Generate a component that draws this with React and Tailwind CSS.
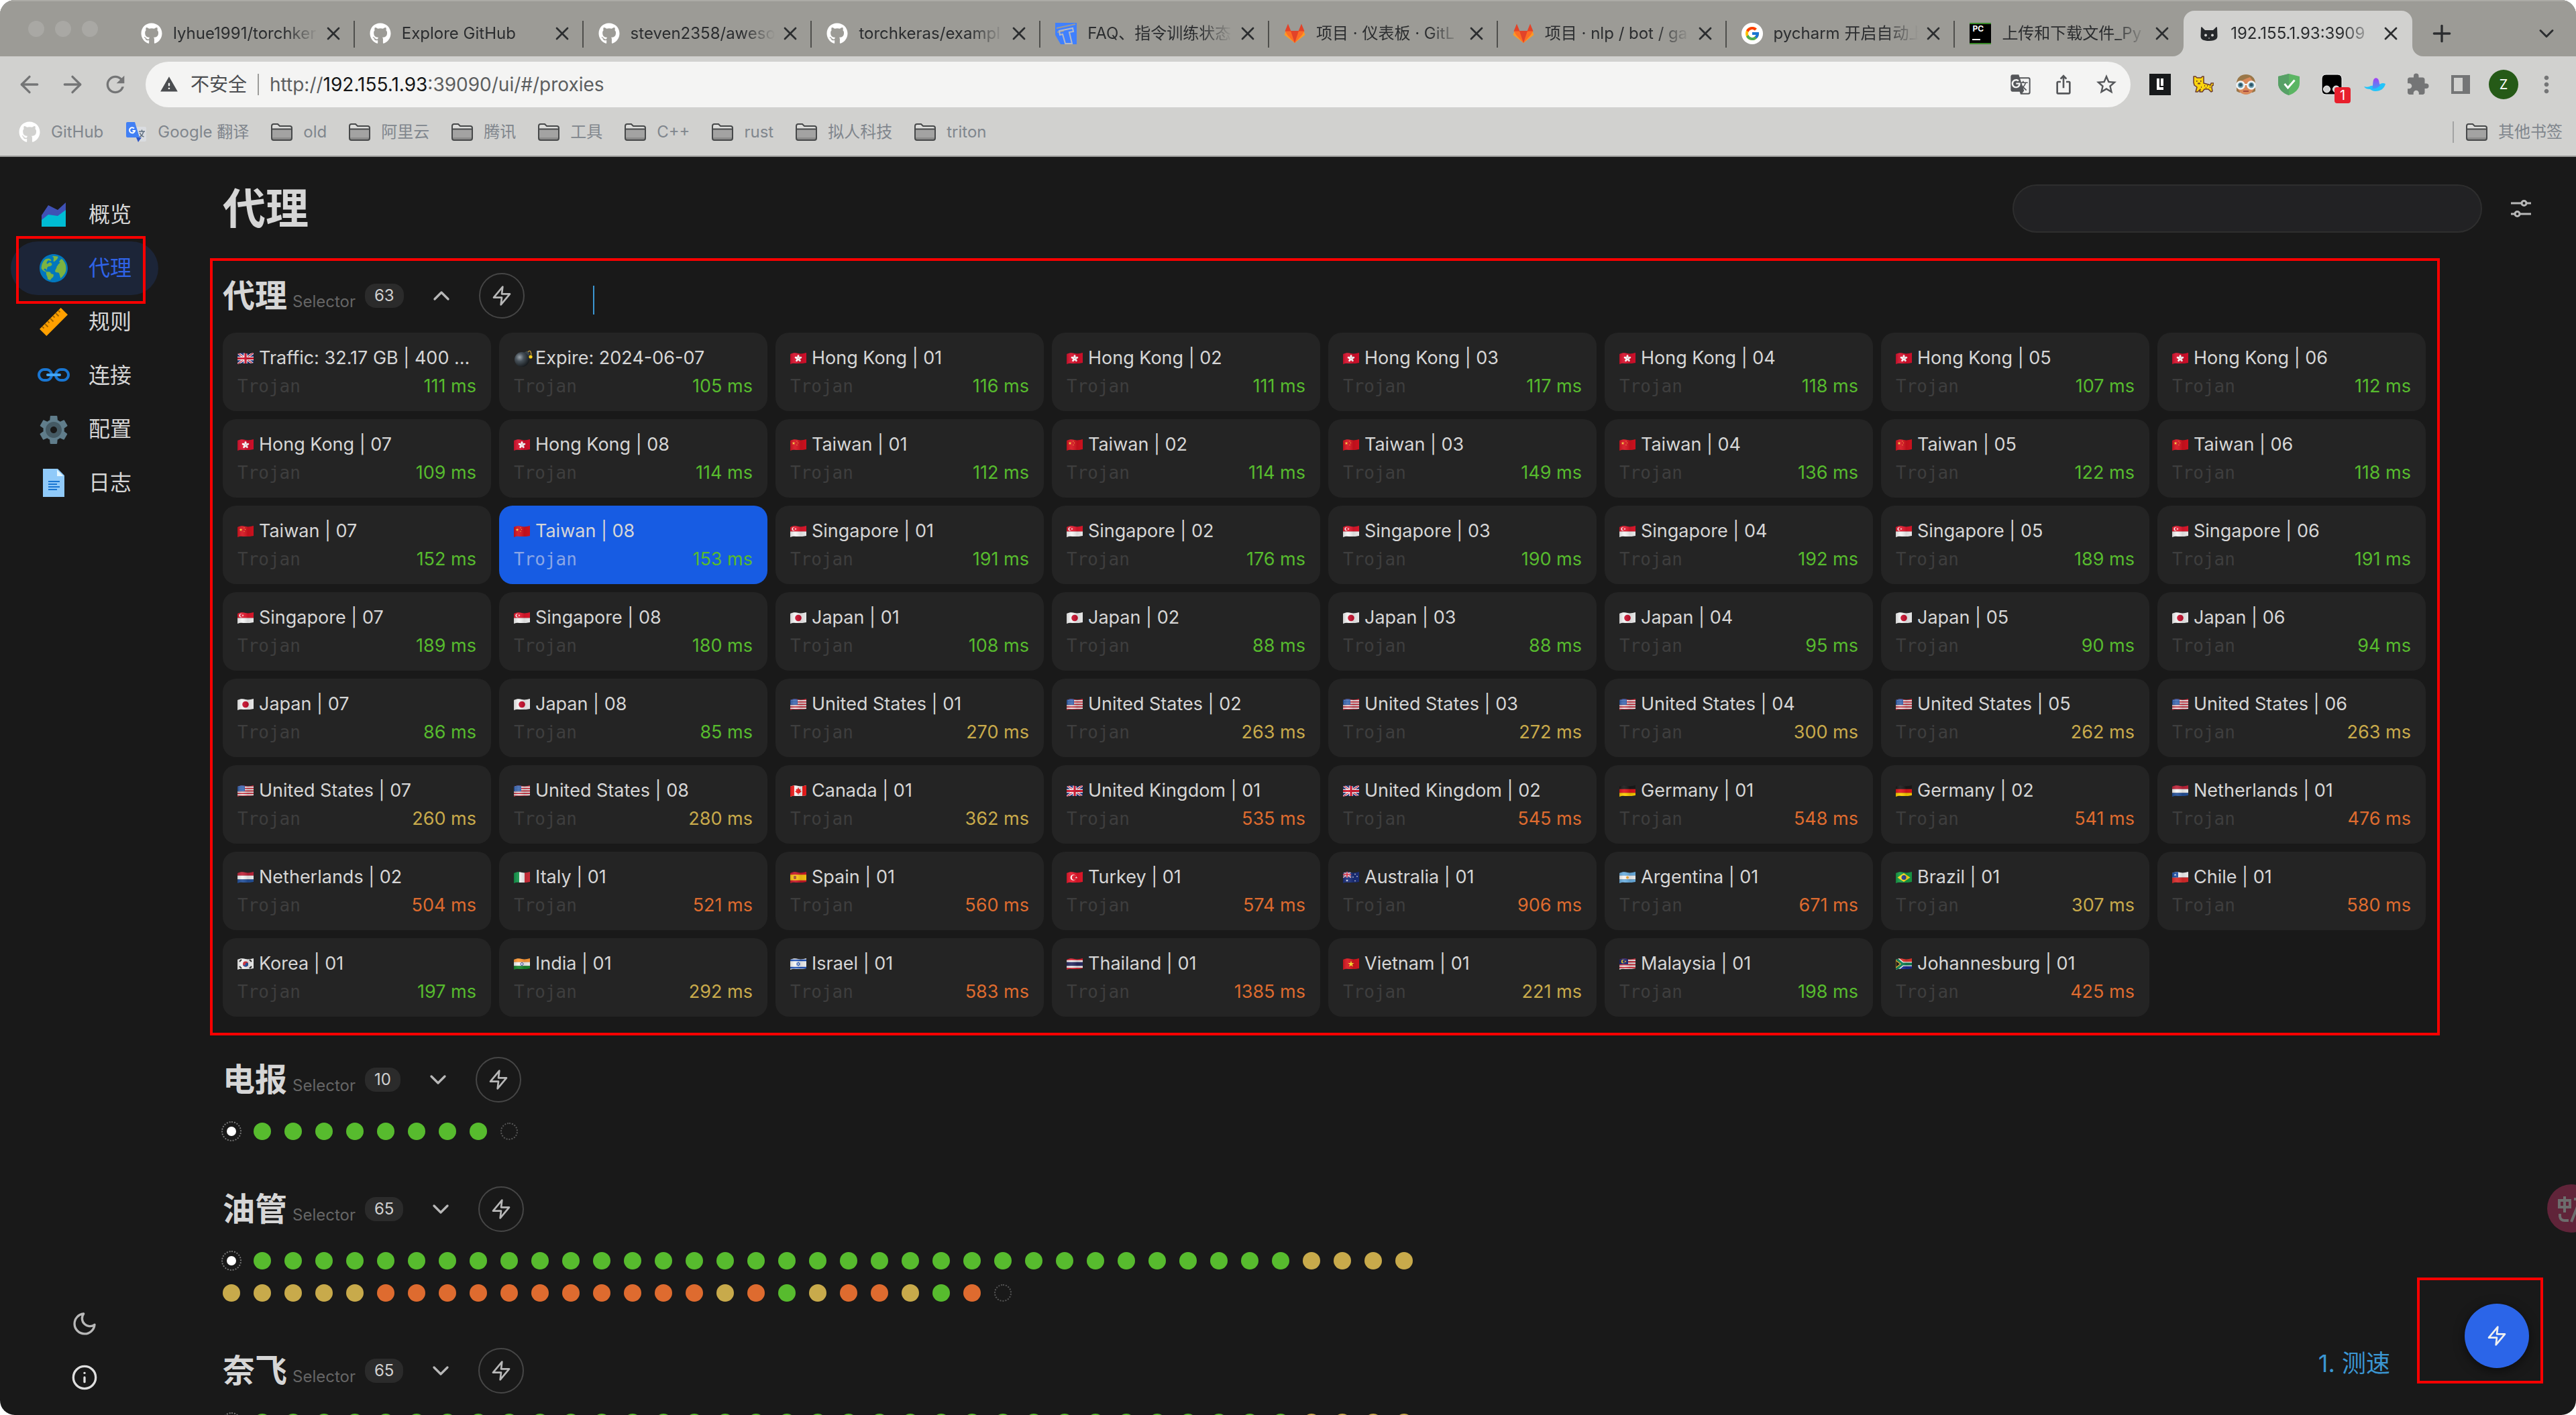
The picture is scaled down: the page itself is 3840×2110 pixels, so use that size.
import React from "react";
import { FaGithub } from "react-icons/fa";
import {
  FcAreaChart,
  FcDocument,
  FcGlobe,
  FcGoogle,
  FcLink,
  FcRuler,
  FcSettings,
} from "react-icons/fc";
import { FiChevronDown, FiChevronUp, FiInfo, FiMoon, FiZap } from "react-icons/fi";
import { MdExtension, MdGTranslate, MdIosShare, MdMoreVert, MdRefresh, MdStarBorder, MdWarning } from "react-icons/md";
import { ArrowLeft, ArrowRight, ChevronDown, Plus, X } from "lucide-react";

/* ---------- small drawings ---------- */

const GitLabIcon = () => (
  <svg viewBox="0 0 32 32" className="size-8">
    <path d="M16 30 0.5 18 3 11.5 16 13 29 11.5 31.5 18Z" fill="#fc9a26" />
    <path d="M16 30 5 18 1.5 12H30.5L27 18Z" fill="#fc6d26" />
    <path d="M16 30 10 12H22Z" fill="#e24329" />
    <path d="M1.5 12.5 6 1.500 10.500 12.500ZM30.5 12.500 26 1.500 21.500 12.500Z" fill="#e24329" />
  </svg>
);

const DocsIcon = () => (
  <svg viewBox="0 0 32 32" className="size-8">
    <rect width="32" height="32" fill="#4080ff" />
    <path d="M2 8 30 2 M3 14 13 12" stroke="#9c9b96" strokeWidth="2" />
    <path d="M6 12 26 8 27 13 21 14 25 31H15L11 17 7 18Z" fill="none" stroke="#b5b9c4" strokeWidth="2" />
    <path d="M0 18 8 32H0Z" fill="#9c9b96" />
  </svg>
);

const GoogleIcon = () => (
  <span className="flex size-8 items-center justify-center rounded-full bg-white">
    <FcGoogle className="size-6" />
  </span>
);

const PyCharmIcon = () => (
  <span className="flex size-8 flex-col justify-between border-y-2 border-y-[#3a8a2a] bg-black px-1 pb-1 text-[12px] leading-[14px] font-bold text-white">
    PC
    <span className="h-[2px] w-3 bg-white" />
  </span>
);

const CatIcon = () => (
  <svg viewBox="0 0 32 32" className="size-8">
    <path
      d="M4 7 5 6 10 11H22L27 6 28 7 28.500 20C28.500 25 24 27 16 27S3.500 25 3.500 20Z"
      fill="#26282b"
    />
    <circle cx="11" cy="18.500" r="2" fill="#d1d1cf" />
    <circle cx="21" cy="18.500" r="2" fill="#d1d1cf" />
    <path d="M14.500 22.500h3L16 24Z" fill="#d1d1cf" />
  </svg>
);

const GitHubIcon = () => <FaGithub className="size-8 text-white" />;

const TranslateIcon = () => (
  <svg viewBox="0 0 32 32" className="size-8">
    <path d="M13 8H29a2 2 0 0 1 2 2V28a2 2 0 0 1-2 2H19Z" fill="#dadce0" />
    <path d="M16 24 19 31 24 24Z" fill="#2f56c4" />
    <path d="M3 1H14L21 24H3a2 2 0 0 1-2-2V3a2 2 0 0 1 2-2Z" fill="#4280f4" />
    <path d="M13 10.500A4 4 0 1 0 14 14H10.500" fill="none" stroke="#fff" strokeWidth="2" />
    <path d="M20 15h9M24.500 12.500V15M27 15c-1 4-3 7-6 8M21.500 17c1 3 3 5 6 6" fill="none" stroke="#5f6f80" strokeWidth="1.500" />
  </svg>
);

const FolderIcon = () => (
  <svg viewBox="0 0 32 26" className="h-[26px] w-8 shrink-0">
    <path d="M1 4a3 3 0 0 1 3-3h6l3 3h15a3 3 0 0 1 3 3v15a3 3 0 0 1-3 3H4a3 3 0 0 1-3-3Z" fill="#dcdcda" />
    <path d="M2 9H30V24H2Z" fill="#a3a3a2" />
    <path d="M2 21H30V24H2Z" fill="#8b8b8a" />
    <path
      d="M1 4a3 3 0 0 1 3-3h6l3 3h15a3 3 0 0 1 3 3v15a3 3 0 0 1-3 3H4a3 3 0 0 1-3-3ZM1 8.500H31"
      fill="none"
      stroke="#47494a"
      strokeWidth="2"
    />
  </svg>
);

const SlidersIcon = () => (
  <svg viewBox="0 0 32 28" className="h-7 w-8" fill="none" stroke="#b8b8b8" strokeWidth="3">
    <path d="M1 6H16M25 6H31M1 22H6M15 22H31" />
    <circle cx="20.500" cy="6" r="3.500" />
    <circle cx="10.500" cy="22" r="3.500" />
  </svg>
);

/* ---------- browser frame ---------- */

const TABS = [
  { icon: GitHubIcon, title: "lyhue1991/torchker" },
  { icon: GitHubIcon, title: "Explore GitHub" },
  { icon: GitHubIcon, title: "steven2358/aweso" },
  { icon: GitHubIcon, title: "torchkeras/exampl" },
  { icon: DocsIcon, title: "FAQ、指令训练状态" },
  { icon: GitLabIcon, title: "项目 · 仪表板 · GitL" },
  { icon: GitLabIcon, title: "项目 · nlp / bot / ga" },
  { icon: GoogleIcon, title: "pycharm 开启自动上" },
  { icon: PyCharmIcon, title: "上传和下载文件_Py" },
  { icon: CatIcon, title: "192.155.1.93:3909", active: true },
];

function Tab({ icon: Icon, title, active, divider }) {
  return (
    <div
      className={
        "relative flex h-[68px] min-w-0 flex-1 items-center pr-4 pl-[22px] " +
        (active ? "rounded-t-[16px] bg-[#d1d1cf]" : "")
      }
    >
      {active && (
        <>
          <svg viewBox="0 0 16 16" className="absolute bottom-0 -left-4 size-4">
            <path d="M16 0V16H0A16 16 0 0 0 16 0Z" fill="#d1d1cf" />
          </svg>
          <svg viewBox="0 0 16 16" className="absolute -right-4 bottom-0 size-4">
            <path d="M0 0V16H16A16 16 0 0 1 0 0Z" fill="#d1d1cf" />
          </svg>
        </>
      )}
      <button className="flex min-w-0 flex-1 items-center gap-4 text-left">
        <span className="shrink-0">
          <Icon />
        </span>
        <span className="min-w-0 flex-1 text-[24px] leading-8 whitespace-nowrap text-[#2b2d2f] [mask-image:linear-gradient(to_right,black_76%,transparent_99%)]">
          {title}
        </span>
      </button>
      <button aria-label={"关闭 " + title} className="ml-1 shrink-0">
        <X className="size-8 text-[#2b2d2f]" strokeWidth={2} />
      </button>
      {divider && <span className="absolute top-[15px] right-0 h-10 w-[2px] bg-[#4f4f4c]" />}
    </div>
  );
}

const BOOKMARKS = [
  { icon: GitHubIcon, label: "GitHub" },
  { icon: TranslateIcon, label: "Google 翻译" },
  { label: "old" },
  { label: "阿里云" },
  { label: "腾讯" },
  { label: "工具" },
  { label: "C++" },
  { label: "rust" },
  { label: "拟人科技" },
  { label: "triton" },
];

function Bookmark({ icon: Icon = FolderIcon, label }) {
  return (
    <a href="#bookmark" className="flex items-center gap-4">
      <Icon />
      {label}
    </a>
  );
}

function Slot({ label, children }) {
  return (
    <button aria-label={label} className="relative flex w-16 shrink-0 items-center justify-center">
      {children}
    </button>
  );
}

function Extensions() {
  return (
    <>
      <Slot label="L">
        <svg viewBox="0 0 32 32" className="size-8">
          <rect width="32" height="32" fill="#17191b" />
          <path d="M11 7H15V20H21V24H11Z" fill="#fff" />
          <path d="M17 7H21V18H17Z" fill="#fff" />
        </svg>
      </Slot>
      <Slot label="Cat">
        <svg viewBox="0 0 32 32" className="size-8">
          <path
            d="M2 4 5 4 7 6H13L15 4 17 4 17 14 24 16 27 17 28 14H32V17H30L29 20 30 26 28 27 24 23 18 23 15 27H11L12 23 8 27H5L7 20 3 17 2 13Z"
            fill="#fbd50e"
            stroke="#6b3a2c"
            strokeWidth="1.500"
            strokeLinejoin="round"
          />
          <path d="M6 11h1.500M12 11h1.500M8 14.500h4M18 18h1M22 18h1M13 20h1M20 21h1M26 20h1" stroke="#6b3a2c" strokeWidth="2" />
        </svg>
      </Slot>
      <Slot label="Persona">
        <svg viewBox="0 0 32 32" className="size-8">
          <path d="M2 15C2 6 8 1 16 1S30 6 30 15L30 26 26 28H6L2 26Z" fill="#9a7748" />
          <path d="M4 15Q10 9 22 5 28 12 28 18C28 26 23 31 16 31S4 26 4 18Z" fill="#d98a5b" />
          <circle cx="8" cy="17" r="5.500" fill="#6fa3b5" stroke="#f2f4f5" strokeWidth="2.500" />
          <circle cx="24" cy="17" r="5.500" fill="#6fa3b5" stroke="#f2f4f5" strokeWidth="2.500" />
          <circle cx="8" cy="16.500" r="2.500" fill="#2f5566" />
          <circle cx="24" cy="16.500" r="2.500" fill="#2f5566" />
          <path d="M13.500 16H18.500" stroke="#f2f4f5" strokeWidth="2" />
          <path d="M12 26H20" stroke="#a5483c" strokeWidth="2" />
        </svg>
      </Slot>
      <Slot label="Shield">
        <svg viewBox="0 0 32 32" className="size-8">
          <path d="M16 0 32 4V14C32 23 25 29 16 32 7 29 0 23 0 14V4Z" fill="#5bb563" />
          <path d="M16 0V32C7 29 0 23 0 14V4Z" fill="#57a066" />
          <path d="M9.500 15 14.500 21 24.500 9.500" fill="none" stroke="#fff" strokeWidth="3" />
        </svg>
      </Slot>
      <Slot label="Tampermonkey">
        <svg viewBox="0 0 32 32" className="size-8">
          <rect x="1" y="1" width="30" height="30" rx="6" fill="#000" stroke="#fff" strokeWidth="1" />
          <circle cx="8.500" cy="23" r="5" fill="#cfcfcf" stroke="#fff" />
          <circle cx="22.500" cy="23" r="5" fill="#cfcfcf" stroke="#fff" />
        </svg>
        <span className="absolute top-5 right-1 flex h-6 w-6 items-center justify-center rounded-[4px] bg-[#e81f2c] text-[20px] leading-6 text-white">
          1
        </span>
      </Slot>
      <Slot label="Bird">
        <svg viewBox="0 0 32 32" className="size-8">
          <defs>
            <linearGradient id="bird-wing" x1="0" y1="0" x2="0" y2="1">
              <stop offset="0" stopColor="#a63df5" />
              <stop offset="1" stopColor="#3f9df5" />
            </linearGradient>
          </defs>
          <path d="M0 19C4 20 7 20 10 18L22 17C25 14 28 13 32 15 30 22 25 26 17 26 13 26 11 24 9 23 5 23 2 22 0 19Z" fill="#22c4fa" />
          <path d="M12 22C13 21 13 17 13.500 12 14 7 17 5 20 7 23 9 22 14 24 17 21 21 17 23 12 22Z" fill="url(#bird-wing)" />
        </svg>
      </Slot>
      <Slot label="扩展程序">
        <MdExtension className="size-9 text-[#747576]" />
      </Slot>
      <Slot label="侧边栏">
        <svg viewBox="0 0 28 28" className="size-7">
          <path d="M0 0H28V28H0ZM4 4V24H17V4Z" fillRule="evenodd" fill="#747576" />
        </svg>
      </Slot>
      <Slot label="账号">
        <span className="flex size-11 items-center justify-center rounded-full bg-[#255a17] text-[20px] leading-none text-white">Z</span>
      </Slot>
      <Slot label="菜单">
        <MdMoreVert className="size-10 text-[#747576]" />
      </Slot>
    </>
  );
}

function BrowserFrame() {
  return (
    <header className="border-b-2 border-b-[#9a9a98] bg-[#d1d1cf]">
      <div className="flex h-[84px] items-end border-t-2 border-t-[#acaba6] bg-[#9c9b96]">
        <div className="flex w-[188px] shrink-0 gap-4 self-start pt-[29px] pl-[42px]">
          <span className="size-6 rounded-full bg-[#a9a8a4]" />
          <span className="size-6 rounded-full bg-[#a9a8a4]" />
          <span className="size-6 rounded-full bg-[#a9a8a4]" />
        </div>
        <div className="flex min-w-0 flex-1">
          {TABS.map((t, i) => (
            <Tab key={i} {...t} divider={i < TABS.length - 2} />
          ))}
        </div>
        <div className="flex h-[68px] w-[244px] shrink-0 items-center justify-between pr-[26px] pl-6 text-[#2b2d2f]">
          <button aria-label="新标签页">
            <Plus className="size-10" strokeWidth={2} />
          </button>
          <button aria-label="搜索标签页">
            <ChevronDown className="size-9" strokeWidth={2} />
          </button>
        </div>
      </div>

      <div className="flex h-[84px] items-center pr-3 text-[#747576]">
        <div className="flex w-[217px] shrink-0 items-center pl-3">
          <Slot label="返回">
            <ArrowLeft className="size-10" strokeWidth={2} />
          </Slot>
          <Slot label="前进">
            <ArrowRight className="size-10" strokeWidth={2} />
          </Slot>
          <Slot label="重新加载">
            <MdRefresh className="size-10" />
          </Slot>
        </div>
        <div className="mr-3 flex h-[68px] min-w-0 flex-1 items-center rounded-full bg-[#f4f4f3] pr-1 pl-[21px]">
          <MdWarning className="size-7 text-[#4b4d50]" />
          <span className="ml-[18px] text-[28px] leading-8 text-[#4b4d50]">不安全</span>
          <span className="mx-4 h-8 w-[2px] bg-[#9c9c9a]" />
          <span role="textbox" aria-label="地址" tabIndex={0} className="min-w-0 flex-1 truncate text-[28px] leading-9 text-[#5c5e60]">
            http://<span className="text-[#141516]">192.155.1.93</span>:39090/ui/#/proxies
          </span>
          <div className="flex text-[#55575a]">
            <Slot label="翻译此页">
              <MdGTranslate className="size-8" />
            </Slot>
            <Slot label="分享">
              <MdIosShare className="size-8" />
            </Slot>
            <Slot label="收藏">
              <MdStarBorder className="size-9" />
            </Slot>
          </div>
        </div>
        <Extensions />
      </div>

      <nav className="flex h-16 items-center gap-[33px] pb-[6px] pl-7 text-[24px] leading-8 text-[#80868d]">
        {BOOKMARKS.map((b) => (
          <Bookmark key={b.label} {...b} />
        ))}
        <div className="ml-auto flex items-center gap-[18px] pr-5">
          <span className="h-8 w-[2px] bg-[#a2a3a3]" />
          <Bookmark label="其他书签" />
        </div>
      </nav>
    </header>
  );
}

/* ---------- flags ---------- */

const HB = ({ c }) => c.map((f, i) => <rect key={i} y={(i * 17) / c.length} width="24" height={17 / c.length + 0.2} fill={f} />);
const VB = ({ c }) => c.map((f, i) => <rect key={i} x={(i * 24) / c.length} width={24 / c.length + 0.2} height="17" fill={f} />);
const STAR = "M0-1 .23-.31H.95L.36.12.59.81 0 .38-.59.81-.36.12-.95-.31H-.23Z";
const Star = ({ x, y, r, fill }) => <path d={STAR} transform={`translate(${x} ${y}) scale(${r})`} fill={fill} />;
const Jack = () => (
  <>
    <rect width="24" height="17" fill="#1b2f7c" />
    <path d="M0 0 24 17M24 0 0 17" stroke="#fff" strokeWidth="3.400" />
    <path d="M0 0 24 17M24 0 0 17" stroke="#d3152f" strokeWidth="1.200" />
    <path d="M12 0V17M0 8.500H24" stroke="#fff" strokeWidth="5.400" />
    <path d="M12 0V17M0 8.500H24" stroke="#d3152f" strokeWidth="3.200" />
  </>
);

const FLAGS = {
  gb: <Jack />,
  hk: (
    <>
      <rect width="24" height="17" fill="#d8102c" />
      {[0, 72, 144, 216, 288].map((a) => (
        <ellipse key={a} cx="12" cy="5.500" rx="1.600" ry="2.600" fill="#fff" transform={`rotate(${a} 12 8.500)`} />
      ))}
    </>
  ),
  cn: (
    <>
      <rect width="24" height="17" fill="#d6121f" />
      <Star x={5} y={6} r={2.6} fill="#ffd83b" />
      <Star x={10} y={3} r={1} fill="#ffd83b" />
      <Star x={11.500} y={5.500} r={1} fill="#ffd83b" />
      <Star x={10} y={8.500} r={1} fill="#ffd83b" />
    </>
  ),
  sg: (
    <>
      <HB c={["#e3182d", "#f4f4f4"]} />
      <circle cx="5" cy="4.800" r="2.600" fill="#fff" />
      <circle cx="6.300" cy="4.800" r="2.300" fill="#e3182d" />
      <circle cx="8" cy="4.800" r="1.200" fill="#f6b3ba" />
    </>
  ),
  jp: (
    <>
      <rect width="24" height="17" fill="#f2f2f2" />
      <circle cx="12" cy="8.500" r="4.800" fill="#c8102e" />
    </>
  ),
  us: (
    <>
      <HB c={["#d22f3f", "#f3f3f3", "#d22f3f", "#f3f3f3", "#d22f3f", "#f3f3f3", "#d22f3f", "#f3f3f3", "#d22f3f"]} />
      <rect width="11" height="9" fill="#2c5aa8" />
      <path d="M2 2.500H10M2 5H10M2 7.300H10" stroke="#b9cbe8" strokeWidth="0.800" strokeDasharray="1 1.200" />
    </>
  ),
  ca: (
    <>
      <rect width="24" height="17" fill="#f4f4f4" />
      <path d="M0 0H6V17H0ZM18 0H24V17H18Z" fill="#f01c1c" />
      <path d="M12 3 13.500 6 15.500 5.500 15 8 17 9 13.500 12H12.500V14H11.500V12H10.500L7 9 9 8 8.500 5.500 10.500 6Z" fill="#f01c1c" />
    </>
  ),
  de: <HB c={["#1a1a1a", "#e3161b", "#ffce00"]} />,
  nl: <HB c={["#c0253a", "#f4f4f4", "#24519b"]} />,
  it: <VB c={["#12954a", "#f4f4f4", "#d22f3c"]} />,
  es: (
    <>
      <rect width="24" height="17" fill="#c9182a" />
      <rect y="4.300" width="24" height="8.400" fill="#fdc613" />
      <rect x="5" y="6" width="4" height="5" rx="1" fill="#a8502f" />
    </>
  ),
  tr: (
    <>
      <rect width="24" height="17" fill="#e8172b" />
      <circle cx="10" cy="8.500" r="4.300" fill="#fff" />
      <circle cx="11.200" cy="8.500" r="3.400" fill="#e8172b" />
      <Star x={14.500} y={8.500} r={2} fill="#fff" />
    </>
  ),
  au: (
    <>
      <rect width="24" height="17" fill="#1b2f7c" />
      <g transform="scale(.5)">
        <Jack />
      </g>
      <Star x={6} y={13} r={2} fill="#fff" />
      <Star x={18} y={3.500} r={1.300} fill="#fff" />
      <Star x={15} y={8} r={1.300} fill="#fff" />
      <Star x={21} y={7} r={1.300} fill="#fff" />
      <Star x={18} y={13.500} r={1.300} fill="#fff" />
    </>
  ),
  ar: (
    <>
      <HB c={["#6cb0e2", "#f4f4f4", "#6cb0e2"]} />
      <circle cx="12" cy="8.500" r="2" fill="#f0a732" />
    </>
  ),
  br: (
    <>
      <rect width="24" height="17" fill="#169c45" />
      <path d="M12 2 21.500 8.500 12 15 2.500 8.500Z" fill="#fedb1e" />
      <circle cx="12" cy="8.500" r="3.500" fill="#263f8f" />
    </>
  ),
  cl: (
    <>
      <HB c={["#f4f4f4", "#db2b2b"]} />
      <rect width="9" height="8.500" fill="#1d4fa3" />
      <Star x={4.500} y={4.500} r={2} fill="#fff" />
    </>
  ),
  kr: (
    <>
      <rect width="24" height="17" fill="#f2f2f2" />
      <circle cx="12" cy="8.500" r="4" fill="#cd2e3a" />
      <path d="M8 8.500a2 2 0 0 0 4 0 2 2 0 0 1 4 0 4 4 0 0 1-8 0Z" fill="#1a53a5" />
      <path d="M3 5 6 2M18 2 21 5M3 12 6 15M18 15 21 12" stroke="#2b2b2b" strokeWidth="2" />
    </>
  ),
  in: (
    <>
      <HB c={["#ff9a37", "#f4f4f4", "#178a2c"]} />
      <circle cx="12" cy="8.500" r="2" fill="none" stroke="#2b3f9c" />
    </>
  ),
  il: (
    <>
      <HB c={["#f4f4f4"]} />
      <path d="M0 3H24M0 14H24" stroke="#1f51b8" strokeWidth="2.400" />
      <path d="M12 5.500 14.500 10H9.500ZM12 11.500 9.500 7H14.500Z" fill="none" stroke="#1f51b8" strokeWidth="0.800" />
    </>
  ),
  th: <HB c={["#dc2433", "#f4f4f4", "#2b2c66", "#2b2c66", "#f4f4f4", "#dc2433"]} />,
  vn: (
    <>
      <rect width="24" height="17" fill="#d9161f" />
      <Star x={12} y={8.500} r={5} fill="#ffe12a" />
    </>
  ),
  my: (
    <>
      <HB c={["#d5303e", "#f3f3f3", "#d5303e", "#f3f3f3", "#d5303e", "#f3f3f3", "#d5303e", "#f3f3f3"]} />
      <rect width="13" height="9" fill="#1b2470" />
      <circle cx="5.500" cy="4.700" r="2.600" fill="#fbd116" />
      <circle cx="6.600" cy="4.700" r="2.100" fill="#1b2470" />
      <Star x={9} y={4.700} r={1.700} fill="#fbd116" />
    </>
  ),
  za: (
    <>
      <HB c={["#e0332b", "#1b2b93"]} />
      <path d="M0 0 10 8.500 0 17M8 8.500H24" stroke="#fff" strokeWidth="6.500" fill="none" />
      <path d="M0 0 10 8.500 0 17M8 8.500H24" stroke="#0c7d51" strokeWidth="4" fill="none" />
      <path d="M0 3 7 8.500 0 14Z" fill="#151515" stroke="#f5b428" strokeWidth="1.200" />
    </>
  ),
};

function Flag({ code }) {
  if (code === "bomb") {
    return (
      <svg viewBox="0 0 28 28" className="-mr-1 size-7 shrink-0">
        <defs>
          <radialGradient id="bomb-shade" cx="0.350" cy="0.350" r="0.700">
            <stop offset="0" stopColor="#9aa3ab" />
            <stop offset="0.400" stopColor="#48525a" />
            <stop offset="1" stopColor="#15191c" />
          </radialGradient>
        </defs>
        <path d="M15 6 20 3 24 8 20 12Z" fill="#39434a" />
        <path d="M21 5Q25 0 26 9" fill="none" stroke="#b8923c" strokeWidth="1.500" />
        <circle cx="12" cy="16" r="11" fill="url(#bomb-shade)" />
        <circle cx="25" cy="12" r="2.600" fill="#ffd21a" />
      </svg>
    );
  }
  return (
    <svg viewBox="0 0 24 17" className="h-[17px] w-6 shrink-0">
      <g clipPath="url(#flag-wave)">
        {FLAGS[code]}
        <rect width="24" height="17" fill="url(#flag-shade)" />
      </g>
    </svg>
  );
}

const FlagDefs = () => (
  <svg className="absolute size-0" aria-hidden="true">
    <defs>
      <clipPath id="flag-wave">
        <path d="M0 2C4 0 8 0 12 1S20 1 24 0V15C20 16 16 16 12 16S4 15 0 17Z" />
      </clipPath>
      <linearGradient id="flag-shade">
        <stop offset="0" stopColor="#000" stopOpacity="0.150" />
        <stop offset="0.300" stopColor="#fff" stopOpacity="0.080" />
        <stop offset="0.650" stopColor="#000" stopOpacity="0.120" />
        <stop offset="1" stopColor="#000" stopOpacity="0.050" />
      </linearGradient>
    </defs>
  </svg>
);

/* ---------- proxies ---------- */

const series = (flag, name, delays) =>
  delays.map((ms, i) => ({ flag, name: `${name} | ${String(i + 1).padStart(2, "0")}`, ms }));

const PROXIES = [
  { flag: "gb", name: "Traffic: 32.17 GB | 400 ...", ms: 111 },
  { flag: "bomb", name: "Expire: 2024-06-07", ms: 105 },
  ...series("hk", "Hong Kong", [116, 111, 117, 118, 107, 112, 109, 114]),
  ...series("cn", "Taiwan", [112, 114, 149, 136, 122, 118, 152, 153]),
  ...series("sg", "Singapore", [191, 176, 190, 192, 189, 191, 189, 180]),
  ...series("jp", "Japan", [108, 88, 88, 95, 90, 94, 86, 85]),
  ...series("us", "United States", [270, 263, 272, 300, 262, 263, 260, 280]),
  ...series("ca", "Canada", [362]),
  ...series("gb", "United Kingdom", [535, 545]),
  ...series("de", "Germany", [548, 541]),
  ...series("nl", "Netherlands", [476, 504]),
  ...series("it", "Italy", [521]),
  ...series("es", "Spain", [560]),
  ...series("tr", "Turkey", [574]),
  ...series("au", "Australia", [906]),
  ...series("ar", "Argentina", [671]),
  ...series("br", "Brazil", [307]),
  ...series("cl", "Chile", [580]),
  ...series("kr", "Korea", [197]),
  ...series("in", "India", [292]),
  ...series("il", "Israel", [583]),
  ...series("th", "Thailand", [1385]),
  ...series("vn", "Vietnam", [221]),
  ...series("my", "Malaysia", [198]),
  ...series("za", "Johannesburg", [425]),
];

const delayColor = (ms) => (ms < 200 ? "text-[#57bb2e]" : ms < 400 ? "text-[#c8aa4b]" : "text-[#de6b2f]");

function ProxyCard({ flag, name, ms }) {
  const selected = name === "Taiwan | 08";
  return (
    <button
      aria-pressed={selected}
      className={
        "flex h-[117px] min-w-0 flex-col rounded-[20px] px-[22px] pt-[20px] text-left " +
        (selected ? "bg-[#175ce3]" : "bg-[#242424]")
      }
    >
      <span className="flex w-full items-center gap-2 text-[27px] leading-9 text-[#d6d6d6]">
        <Flag code={flag} />
        <span className="truncate">{name}</span>
      </span>
      <span className="flex w-full items-center justify-between pt-[6px] text-[27px] leading-9">
        <span
          className={"font-[DejaVu_Sans_Mono,monospace] text-[26px] " + (selected ? "text-[#8aa6e6]" : "text-[#3e3e3e]")}
        >
          Trojan
        </span>
        <span className={delayColor(ms)}>{ms} ms</span>
      </span>
    </button>
  );
}

const DOT = {
  G: "bg-[#57bb2e]",
  Y: "bg-[#c8aa4b]",
  O: "bg-[#de6b2f]",
  E: "border-2 border-dotted border-[#565656]",
};

function Dots({ pattern }) {
  return (
    <div className="mt-[30px] flex max-w-[1800px] flex-wrap gap-x-5 gap-y-[22px]">
      {[...pattern].map((p, i) =>
        p === "S" ? (
          <button
            key={i}
            aria-label="当前节点"
            className="flex size-[26px] items-center justify-center rounded-full outline-2 outline-[#777] outline-dotted"
          >
            <span className="size-[14px] rounded-full bg-white" />
          </button>
        ) : (
          <button key={i} aria-label="节点" className={"size-[26px] rounded-full " + DOT[p]} />
        )
      )}
    </div>
  );
}

function GroupHeader({ name, count, open }) {
  const Chevron = open ? FiChevronUp : FiChevronDown;
  return (
    <div className="flex h-[68px] items-center">
      <h2 className="text-[48px] leading-[64px] font-bold text-[#d6d6d6]">{name}</h2>
      <span className="pt-[18px] pl-2 text-[24px] leading-8 text-[#656565]">Selector</span>
      <span className="ml-[14px] rounded-[16px] bg-[#2b2b2b] px-[14px] text-[24px] leading-9 text-[#d0d0d0]">{count}</span>
      <button aria-label={"展开 " + name} className="mx-6 flex size-16 items-center justify-center">
        <Chevron className="size-10 text-[#b8b8b8]" />
      </button>
      <button
        aria-label={"测速 " + name}
        className="flex size-[68px] items-center justify-center rounded-full border-2 border-[#464646]"
      >
        <FiZap className="size-8 text-[#b8b8b8]" />
      </button>
    </div>
  );
}

const LONG = "S" + "G".repeat(34) + "YYYY" + "YYYYY" + "O".repeat(11) + "YOGYOOYGOE";

/* ---------- sidebar ---------- */

const NAV = [
  { icon: FcAreaChart, label: "概览" },
  { icon: FcGlobe, label: "代理", active: true },
  { icon: FcRuler, label: "规则" },
  { icon: FcLink, label: "连接" },
  { icon: FcSettings, label: "配置" },
  { icon: FcDocument, label: "日志" },
];

function Sidebar() {
  return (
    <aside className="flex w-[252px] shrink-0 flex-col px-4 pt-[46px]">
      <nav>
        {NAV.map(({ icon: Icon, label, active }) => (
          <a
            key={label}
            href={"#" + label}
            className={
              "relative flex h-20 items-center gap-7 rounded-full pl-10 text-[32px] leading-10 " +
              (active ? "bg-[#1c2538] text-[#2f63e6]" : "text-[#d6d6d6]")
            }
          >
            <Icon className="size-12" />
            {label}
            {active && <span className="absolute -top-2 right-[19px] -bottom-[13px] left-2 border-4 border-[#fb0000]" />}
          </a>
        ))}
      </nav>
      <div className="mt-auto flex flex-col gap-10 pb-9 pl-[90px]">
        <button aria-label="主题">
          <FiMoon className="size-10 text-[#b8b8b8]" />
        </button>
        <button aria-label="关于">
          <FiInfo className="size-10 text-[#dedede]" />
        </button>
      </div>
    </aside>
  );
}

export default function App() {
  return (
    <div className="relative flex h-screen flex-col overflow-hidden rounded-[22px] bg-[#191919] font-[Inter,Noto_Sans_CJK_SC,sans-serif]">
      <FlagDefs />
      <BrowserFrame />
      <div className="flex min-h-0 flex-1">
        <Sidebar />
        <main className="min-w-0 flex-1 overflow-hidden">
          <div className="flex h-[151px] items-center justify-between pt-[2px] pr-[66px] pl-20">
            <h1 className="text-[64px] leading-[80px] font-bold text-[#d6d6d6]">代理</h1>
            <div className="flex items-center gap-[42px]">
              <input
                aria-label="搜索"
                type="text"
                className="h-[72px] w-[700px] rounded-full border-2 border-[#2e2e2e] bg-[#222224] px-8 text-[28px] text-[#d6d6d6]"
              />
              <button aria-label="设置">
                <SlidersIcon />
              </button>
            </div>
          </div>

          <section className="relative pt-[22px] pr-[224px] pb-[60px] pl-20">
            <GroupHeader name="代理" count={63} open />
            <div className="mt-[21px] grid grid-cols-[repeat(auto-fill,minmax(380px,1fr))] gap-3">
              {PROXIES.map((p) => (
                <ProxyCard key={p.name} {...p} />
              ))}
            </div>
            <span className="pointer-events-none absolute top-0 right-[203px] bottom-8 left-[61px] border-4 border-[#fb0000]" />
            <span className="absolute top-[41px] left-[632px] h-[43px] w-[2px] bg-[#3b96d2]" />
          </section>

          <section className="pb-[69px] pl-20">
            <GroupHeader name="电报" count={10} />
            <Dots pattern="SGGGGGGGGE" />
          </section>
          <section className="pb-[69px] pl-20">
            <GroupHeader name="油管" count={65} />
            <Dots pattern={LONG} />
          </section>
          <section className="pb-[69px] pl-20">
            <GroupHeader name="奈飞" count={65} />
            <Dots pattern={LONG} />
          </section>
        </main>
      </div>

      <div className="absolute right-[49px] bottom-[47px] flex items-end gap-10">
        <span className="pb-[6px] text-[36px] leading-[48px] text-[#3b96d2]">1. 测速</span>
        <div className="flex h-[158px] w-[188px] items-center justify-end border-4 border-[#fb0000] pt-4 pr-[17px]">
          <button
            aria-label="全部测速"
            className="flex size-24 items-center justify-center rounded-full bg-[#2b65e8] shadow-[0_4px_16px_rgba(0,0,0,0.5)]"
          >
            <FiZap className="size-8 text-[#f0f0f0]" />
          </button>
        </div>
      </div>

      <button
        aria-label="翻译"
        className="absolute -right-[29px] bottom-[272px] size-[72px] overflow-hidden rounded-full bg-[#602439]"
      >
        <svg viewBox="0 0 72 72" className="size-full" fill="none" stroke="#6d6d6d" strokeWidth="4">
          <path d="M18 24H34V34H18ZM26 18V42M19 44V48Q20 54 26 54H32M40 22H56M36 56 44 36 52 56" />
        </svg>
      </button>
    </div>
  );
}
